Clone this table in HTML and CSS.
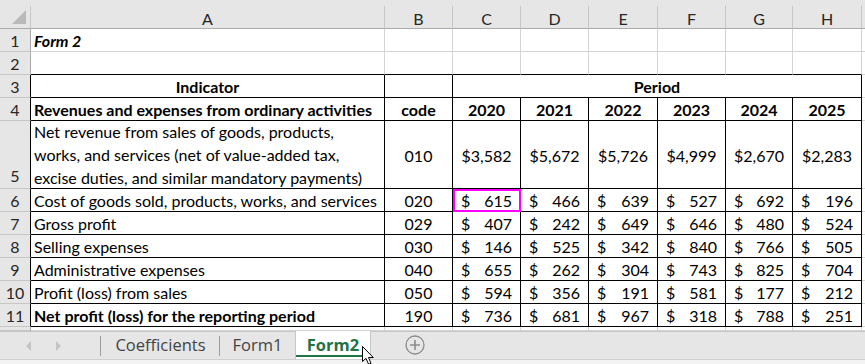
FILE: index.html
```html
<!DOCTYPE html>
<html lang="en">
<head>
  <meta charset="UTF-8" />
  <title>Form2 | Workbook</title>
  <link rel="stylesheet" href="styles.css">
</head>
<body>
  <div class="sheet">
    <div class="grid">
      <div class="strip"></div>

      <div class="corner"><span class="corner-tri"></span></div>
      <div class="colhead">A</div>
      <div class="colhead">B</div>
      <div class="colhead">C</div>
      <div class="colhead">D</div>
      <div class="colhead">E</div>
      <div class="colhead">F</div>
      <div class="colhead">G</div>
      <div class="colhead">H</div>
      <div class="colhead last"></div>

      <!-- row 1 -->
      <div class="rowhead">1</div>
      <div class="c title">Form 2</div>
      <div class="c"></div><div class="c"></div><div class="c"></div><div class="c"></div>
      <div class="c"></div><div class="c"></div><div class="c"></div><div class="c"></div>

      <!-- row 2 -->
      <div class="rowhead">2</div>
      <div class="c top"></div><div class="c top"></div><div class="c top"></div><div class="c top"></div>
      <div class="c top"></div><div class="c top"></div><div class="c top"></div><div class="c top"></div>
      <div class="c"></div>

      <!-- row 3 -->
      <div class="rowhead in">3</div>
      <div class="c b bold center">Indicator</div>
      <div class="c b"></div>
      <div class="c b bold center period">Period</div>
      <div class="c"></div>

      <!-- row 4 -->
      <div class="rowhead in">4</div>
      <div class="c b bold">Revenues and expenses from ordinary activities</div>
      <div class="c b bold center">code</div>
      <div class="c b bold center">2020</div>
      <div class="c b bold center">2021</div>
      <div class="c b bold center">2022</div>
      <div class="c b bold center">2023</div>
      <div class="c b bold center">2024</div>
      <div class="c b bold center">2025</div>
      <div class="c"></div>

      <!-- row 5 -->
      <div class="rowhead in tall">5</div>
      <div class="c b wrap">Net revenue from sales of goods, products, works, and services (net of value-added tax, excise duties, and similar mandatory payments)</div>
      <div class="c b center">010</div>
      <div class="c b center">$3,582</div>
      <div class="c b center">$5,672</div>
      <div class="c b center">$5,726</div>
      <div class="c b center">$4,999</div>
      <div class="c b center">$2,670</div>
      <div class="c b center">$2,283</div>
      <div class="c"></div>

      <!-- row 6 -->
      <div class="rowhead in">6</div>
      <div class="c b">Cost of goods sold, products, works, and services</div>
      <div class="c b center">020</div>
      <div class="c b money picked"><span>$</span><span>615</span></div>
      <div class="c b money"><span>$</span><span>466</span></div>
      <div class="c b money"><span>$</span><span>639</span></div>
      <div class="c b money"><span>$</span><span>527</span></div>
      <div class="c b money"><span>$</span><span>692</span></div>
      <div class="c b money"><span>$</span><span>196</span></div>
      <div class="c"></div>

      <!-- row 7 -->
      <div class="rowhead in">7</div>
      <div class="c b">Gross profit</div>
      <div class="c b center">029</div>
      <div class="c b money"><span>$</span><span>407</span></div>
      <div class="c b money"><span>$</span><span>242</span></div>
      <div class="c b money"><span>$</span><span>649</span></div>
      <div class="c b money"><span>$</span><span>646</span></div>
      <div class="c b money"><span>$</span><span>480</span></div>
      <div class="c b money"><span>$</span><span>524</span></div>
      <div class="c"></div>

      <!-- row 8 -->
      <div class="rowhead in">8</div>
      <div class="c b">Selling expenses</div>
      <div class="c b center">030</div>
      <div class="c b money"><span>$</span><span>146</span></div>
      <div class="c b money"><span>$</span><span>525</span></div>
      <div class="c b money"><span>$</span><span>342</span></div>
      <div class="c b money"><span>$</span><span>840</span></div>
      <div class="c b money"><span>$</span><span>766</span></div>
      <div class="c b money"><span>$</span><span>505</span></div>
      <div class="c"></div>

      <!-- row 9 -->
      <div class="rowhead in">9</div>
      <div class="c b">Administrative expenses</div>
      <div class="c b center">040</div>
      <div class="c b money"><span>$</span><span>655</span></div>
      <div class="c b money"><span>$</span><span>262</span></div>
      <div class="c b money"><span>$</span><span>304</span></div>
      <div class="c b money"><span>$</span><span>743</span></div>
      <div class="c b money"><span>$</span><span>825</span></div>
      <div class="c b money"><span>$</span><span>704</span></div>
      <div class="c"></div>

      <!-- row 10 -->
      <div class="rowhead in">10</div>
      <div class="c b">Profit (loss) from sales</div>
      <div class="c b center">050</div>
      <div class="c b money"><span>$</span><span>594</span></div>
      <div class="c b money"><span>$</span><span>356</span></div>
      <div class="c b money"><span>$</span><span>191</span></div>
      <div class="c b money"><span>$</span><span>581</span></div>
      <div class="c b money"><span>$</span><span>177</span></div>
      <div class="c b money"><span>$</span><span>212</span></div>
      <div class="c"></div>

      <!-- row 11 -->
      <div class="rowhead in">11</div>
      <div class="c b bold">Net profit (loss) for the reporting period</div>
      <div class="c b center">190</div>
      <div class="c b money"><span>$</span><span>736</span></div>
      <div class="c b money"><span>$</span><span>681</span></div>
      <div class="c b money"><span>$</span><span>967</span></div>
      <div class="c b money"><span>$</span><span>318</span></div>
      <div class="c b money"><span>$</span><span>788</span></div>
      <div class="c b money"><span>$</span><span>251</span></div>
      <div class="c"></div>

      <!-- row 12 (cut off) -->
      <div class="rowhead"></div>
      <div class="c"></div><div class="c"></div><div class="c"></div><div class="c"></div>
      <div class="c"></div><div class="c"></div><div class="c"></div><div class="c"></div>
      <div class="c"></div>
    </div>

    <div class="tabbar">
      <div class="tab-nav">
        <span class="arrow left"></span>
        <span class="arrow right"></span>
      </div>
      <div class="tab tab-coef">Coefficients</div>
      <div class="tab tab-form1">Form1</div>
      <div class="tab active">Form2</div>
      <div class="add-sheet">
        <svg width="20" height="20" viewBox="0 0 20 20">
          <circle cx="10" cy="10" r="9" fill="none" stroke="#8c8c8c" stroke-width="1.3"/>
          <path d="M10 5v10M5 10h10" stroke="#8c8c8c" stroke-width="1.6"/>
        </svg>
      </div>
    </div>
    <div class="statusline"></div>

    <svg class="cursor" width="13" height="20" viewBox="0 0 13 20">
      <path d="M0.5 0.5 L0.5 15.5 L4 12.3 L6.6 18.3 L9 17.3 L6.5 11.5 L11.3 11.5 Z" fill="#fff" stroke="#000" stroke-width="1" stroke-linejoin="miter"/>
    </svg>
  </div>
</body>
</html>
```

FILE: styles.css
```css
* {
  box-sizing: border-box;
  margin: 0;
  padding: 0;
}

body {
  font-family: Lato, 'Liberation Sans', sans-serif;
  font-size: 16px;
  color: #000;
  background: #fff;
  width: 865px;
  height: 364px;
  overflow: hidden;
}

.sheet {
  position: relative;
  width: 865px;
  height: 364px;
}

.grid {
  display: grid;
  grid-template-columns: 31px 354px 68px 68px 68px 69px 68px 67px 69px 1fr;
  grid-template-rows: 6px 23px 23px 23px 23px 23px 68px 23px 23px 23px 23px 23px 23px 4px;
}

.strip {
  grid-column: 1 / -1;
  background: #e6e6e6;
}

.corner,
.colhead,
.rowhead {
  background: #e6e6e6;
  color: #262626;
  display: flex;
  align-items: center;
  justify-content: center;
}

.corner {
  position: relative;
  border-right: 1px solid #c6c6c6;
  border-bottom: 1px solid #ababab;
}

.corner-tri {
  position: absolute;
  right: 4px;
  bottom: 4px;
  width: 0;
  height: 0;
  border-left: 14px solid transparent;
  border-bottom: 14px solid #b9b9b9;
}

.colhead {
  border-right: 1px solid #c6c6c6;
  border-bottom: 1px solid #ababab;
  padding-top: 2px;
}

.colhead.last {
  border-right: none;
}

.rowhead {
  border-right: 1px solid #ababab;
  border-bottom: 1px solid #c6c6c6;
  padding-top: 1px;
}

.rowhead.in {
  border-right-color: #000;
}

.rowhead.tall {
  align-items: flex-end;
  padding-bottom: 3px;
}

.c {
  display: flex;
  align-items: center;
  padding: 1px 3px 0;
  white-space: nowrap;
  overflow: hidden;
  border-right: 1px solid #d4d4d4;
  border-bottom: 1px solid #d4d4d4;
}

.c.top {
  border-bottom-color: #000;
}

.c.b {
  border-right-color: #000;
  border-bottom-color: #000;
}

.title {
  font-weight: bold;
  font-style: italic;
}

.bold {
  font-weight: bold;
}

.center {
  justify-content: center;
}

.period {
  grid-column: span 6;
}

.wrap {
  white-space: normal;
  line-height: 23px;
  padding-top: 0;
}

.money {
  justify-content: space-between;
  padding: 1px 8px 0 8px;
}

.picked {
  outline: 2px solid #ff00ff;
  outline-offset: -2px;
  position: relative;
}

.tabbar {
  display: flex;
  height: 29px;
  background: #e6e6e6;
  border-top: 1px solid #c6c6c6;
  border-bottom: 1px solid #d0d0d0;
  font-family: 'Open Sans', 'Liberation Sans', sans-serif;
  font-size: 16.5px;
  color: #444;
}

.tab-nav {
  width: 101px;
  display: flex;
  align-items: center;
  position: relative;
}

.tab-nav::after {
  content: '';
  position: absolute;
  right: 0;
  top: 4px;
  height: 20px;
  border-right: 1px solid #9e9e9e;
}

.arrow {
  display: block;
  width: 0;
  height: 0;
  border-top: 5px solid transparent;
  border-bottom: 5px solid transparent;
}

.arrow.left {
  margin-left: 26px;
  border-right: 5px solid #c4c4c4;
}

.arrow.right {
  margin-left: 25px;
  border-left: 5px solid #c4c4c4;
}

.tab {
  display: flex;
  align-items: center;
  justify-content: center;
  position: relative;
  padding-bottom: 2px;
}

.tab-coef {
  width: 119px;
}

.tab-coef::after {
  content: '';
  position: absolute;
  right: 0;
  top: 4px;
  height: 20px;
  border-right: 1px solid #9e9e9e;
}

.tab-form1 {
  width: 75px;
}

.tab.active {
  width: 76px;
  margin-top: -1px;
  background: #fff;
  border-left: 1px solid #c6c6c6;
  border-right: 1px solid #c6c6c6;
  color: #217346;
  font-weight: bold;
}

.tab.active::after {
  content: '';
  position: absolute;
  left: 0;
  right: 6px;
  bottom: 2px;
  height: 2px;
  background: #217346;
}

.add-sheet {
  margin-left: 34px;
  display: flex;
  align-items: center;
}

.add-sheet svg {
  display: block;
  margin-top: -2px;
}

.statusline {
  height: 4px;
  background: #f3f3f3;
}

.cursor {
  position: absolute;
  left: 362px;
  top: 346px;
}
```
